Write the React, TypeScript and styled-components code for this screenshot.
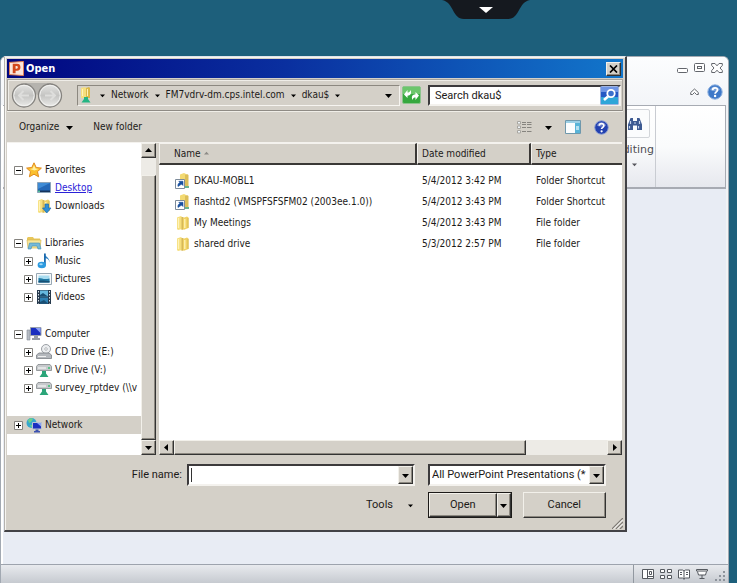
import React from "react";
import styled, { createGlobalStyle, css } from "styled-components";

const face = "#d4d0c8";
const ink = "#1c1a18";
const tahoma = '"DejaVu Sans Condensed", "DejaVu Sans", Tahoma, sans-serif';
const segoe = 'Roboto, "Noto Sans", sans-serif';

const Global = createGlobalStyle`
  * { box-sizing: border-box; }
  html, body { margin: 0; height: 100%; }
  body { background: #1d5f7b; color: ${ink}; font: 10px/18px ${tahoma}; overflow: hidden; }
  button, input, select { font: inherit; color: inherit; margin: 0; padding: 0; border: 0; border-radius: 0; background: none; }
  svg { display: block; flex: none; }
`;

const raised = css`
  background: ${face};
  border: 1px solid;
  border-color: #f2f0ea #333 #333 #f2f0ea;
  box-shadow: inset -1px -1px 0 #8c8880;
`;
const sunken = css`
  background: #fff;
  border: 2px solid;
  border-color: #3c3a3c #f4f2ee #f4f2ee #3c3a3c;
`;

const Desktop = styled.div`
  position: relative;
  min-height: 100vh;
  display: flex;
  flex-direction: column;
  padding: 56px 8px 0 0;
`;
const PullTab = styled.button`
  position: absolute;
  top: 0;
  left: 66%;
  transform: translateX(-50%);
`;

/* Application window behind the dialog */
const Stack = styled.div`
  flex: 1;
  display: grid;
  grid-template: minmax(0, 1fr) / minmax(0, 1fr);
  & > * { grid-area: 1 / 1; }
`;
const AppWindow = styled.div`
  display: flex;
  flex-direction: column;
  background: #e8ecf4;
  border: solid #a2a9b2;
  border-width: 1px 1px 0 1px;
  border-radius: 6px 6px 0 0;
  box-shadow: inset 2px 2px 0 #fff, inset -2px 0 0 #f1f3f5;
  overflow: hidden;
`;
const AppTop = styled.div`
  height: 48px;
  display: flex;
  flex-direction: column;
  align-items: flex-end;
  padding: 5px 5px 0 0;
  gap: 10px;
  background: linear-gradient(#fcfdfe, #f3f5f8);
`;
const WindowButtons = styled.div`
  display: flex;
  align-items: center;
  gap: 6px;
`;
const HelpRow = styled(WindowButtons)`
  gap: 8px;
`;
const PlainButton = styled.button`
  display: flex;
  align-items: center;
  gap: 7px;
`;
const Ribbon = styled.div`
  height: 84px;
  display: flex;
  justify-content: flex-end;
  margin: 0 2px;
  padding-right: 69px;
  border: solid #a7abb3;
  border-width: 1px 1px 2px 0;
  background: linear-gradient(#fff, #fafbfc 50%, #e6e8ee);
`;
const RibbonGroup = styled.div`
  display: flex;
  flex-direction: column;
  align-items: center;
  padding: 3px 1px 0 5px;
  border-right: 1px solid #c9ccd2;
`;
const RibbonButton = styled.button`
  display: flex;
  flex-direction: column;
  align-items: center;
  gap: 4px;
  font: 11px/16px "DejaVu Sans", sans-serif;
  color: #4e4e54;
`;
const RibbonFace = styled.span`
  display: flex;
  align-items: center;
  justify-content: center;
  width: 30px;
  height: 29px;
  border: 1px solid #d3d6da;
  border-radius: 2px;
  background: #fbfcfd;
`;
const StatusBar = styled.div`
  margin-top: auto;
  height: 19px;
  display: flex;
  justify-content: flex-end;
  align-items: center;
  border-top: 1px solid #9da3ad;
  background: linear-gradient(#e8eaee, #c6cad0);
`;
const ViewButtons = styled.div`
  display: flex;
  align-items: center;
  gap: 6px;
  height: 18px;
  padding: 1px 2px 0 8px;
  border-left: 1px solid #9298a0;
`;

/* Open dialog */
const Dialog = styled.section`
  align-self: start;
  margin: 0 102px 0 4px;
  padding: 2px 2px 0;
  border: solid;
  border-width: 1px 2px 2px 1px;
  border-color: #dfe5ec #424246 #424246 #b4b2ae;
  box-shadow: inset 1px 1px 0 #f6f4f0;
  background: ${face};
  display: flex;
  flex-direction: column;
  z-index: 1;
`;
const TitleBar = styled.header`
  display: flex;
  align-items: center;
  gap: 2px;
  height: 19px;
  padding: 0 2px;
  background: linear-gradient(90deg, #000680, #0a2f9f 45%, #1276cb);
  color: #fff;
`;
const Title = styled.h1`
  margin: 0;
  flex: 1;
  font: bold 11px/18px ${tahoma};
`;
const CloseButton = styled.button`
  ${raised}
  width: 15px;
  height: 14px;
  display: flex;
  align-items: center;
  justify-content: center;
`;
const NavBar = styled.div`
  display: flex;
  align-items: center;
  height: 32px;
  margin-top: 1px;
  padding: 0 1px 0 3px;
  border: 1px solid #8f8b85;
  border-color: #a7a39c #a7a39c #8f8b85 #a7a39c;
  box-shadow: inset 1px 1px 0 #efede8, 0 1px 0 #f0eee8;
`;
const Address = styled.div`
  flex: 1;
  min-width: 0;
  display: flex;
  align-items: center;
  height: 21px;
  margin-left: 12px;
  padding: 0 7px 0 0;
  border: 1px solid;
  border-color: #8c8880 #f6f4f0 #f6f4f0 #8c8880;
`;
const Crumbs = styled.div`
  display: flex;
  flex: 1;
  align-items: center;
  gap: 6px;
  padding-left: 6px;
  white-space: nowrap;
`;
const GreenButton = styled(PlainButton)`
  margin: 0 7px 0 2px;
`;
const SearchBox = styled.div`
  ${sunken}
  display: flex;
  align-items: center;
  width: 193px;
  height: 21px;
  & input {
    flex: 1;
    min-width: 0;
    padding-left: 5px;
    outline: 0;
    font: 11px/17px ${segoe};
    &::placeholder { color: ${ink}; opacity: 1; }
  }
`;
const ToolBar = styled.div`
  display: flex;
  align-items: center;
  gap: 20px;
  height: 31px;
  padding: 1px 14px 0 12px;
`;
const ToolGroup = styled.div`
  display: flex;
  align-items: center;
  gap: 13px;
  margin-left: auto;
`;
const Panes = styled.div`
  display: flex;
  gap: 3px;
  height: 313px;
  margin-right: 1px;
  border-top: 1px solid #f4f2ee;
`;
const TreePane = styled.nav`
  display: flex;
  width: 149px;
  background: #fff;
`;
const Tree = styled.div`
  flex: 1;
  min-width: 0;
  display: flex;
  flex-direction: column;
  gap: 19px;
  padding-top: 18px;
  overflow: hidden;
`;
const TreeRow = styled.div<{ $child?: boolean; $selected?: boolean }>`
  display: flex;
  align-items: center;
  height: 18px;
  padding-left: ${(p) => (p.$child ? 17 : 7)}px;
  white-space: nowrap;
  background: ${(p) => (p.$selected ? face : "transparent")};
`;
const Expander = styled.button<{ $blank?: boolean }>`
  flex: none;
  width: 9px;
  visibility: ${(p) => (p.$blank ? "hidden" : "visible")};
`;
const TreeIcon = styled.span`
  flex: none;
  width: 16px;
  margin: 0 3px;
`;
const TreeLink = styled.a<{ $active?: boolean }>`
  color: ${(p) => (p.$active ? "#2a22d8" : ink)};
  text-decoration: ${(p) => (p.$active ? "underline" : "none")};
`;
const ScrollBar = styled.div<{ $row?: boolean }>`
  display: flex;
  flex-direction: ${(p) => (p.$row ? "row" : "column")};
  flex: none;
  ${(p) => (p.$row ? "height" : "width")}: 15px;
  background: #edebe6;
`;
const ScrollButton = styled.button`
  ${raised}
  width: 15px;
  height: 15px;
  flex: none;
  display: flex;
  align-items: center;
  justify-content: center;
`;
const Thumb = styled.div<{ $size: number }>`
  ${raised}
  flex: ${(p) => p.$size} 1 0;
`;
const Track = styled.div<{ $size: number }>`
  flex: ${(p) => p.$size} 1 0;
`;
const FilePane = styled.div`
  flex: 1;
  min-width: 0;
  display: flex;
  flex-direction: column;
  justify-content: space-between;
  background: #fff;
`;
const Files = styled.table`
  width: 100%;
  table-layout: fixed;
  border-collapse: separate;
  border-spacing: 0;
  white-space: nowrap;
  & th {
    height: 22px;
    padding: 0 0 0 4px;
    text-align: left;
    font-weight: normal;
    background: ${face};
    border: solid;
    border-width: 1px 2px 2px 1px;
    border-color: #f4f2ee #3a3836 #3a3836 #f4f2ee;
  }
  & th:first-child { padding-left: 14px; }
  & th:last-child { border-right: 0; }
  & thead::after { content: ""; display: block; height: 5px; }
  & td { height: 21px; padding: 0 0 0 5px; }
  & td:first-child { padding-left: 16px; }
`;
const Label = styled.span`
  display: flex;
  align-items: center;
  gap: 3px;
`;
const Footer = styled.footer`
  display: grid;
  grid-template-columns: 1fr 178px;
  gap: 6px 13px;
  padding: 9px 17px 0 0;
  font: 11px/18px ${segoe};
`;
const FileNameRow = styled.div`
  display: flex;
  align-items: center;
  justify-content: flex-end;
  gap: 5px;
  & input {
    flex: 1;
    min-width: 0;
    outline: 0;
    height: 100%;
    background: linear-gradient(#333, #333) 2px center / 1px 14px no-repeat;
  }
`;
const Combo = styled.div<{ $wide?: boolean }>`
  ${sunken}
  display: flex;
  position: relative;
  height: 22px;
  width: ${(p) => (p.$wide ? "228px" : "auto")};
  & select {
    flex: 1;
    min-width: 0;
    appearance: none;
    outline: 0;
    padding: 0 15px 0 2px;
    line-height: 18px;
  }
`;
const DropButton = styled(ScrollButton)`
  height: 18px;
`;
const DropFace = styled(ScrollButton).attrs({ as: "span" })`
  position: absolute;
  top: 0;
  right: 0;
  height: 18px;
  pointer-events: none;
`;
const Tools = styled(PlainButton)`
  justify-self: end;
  gap: 15px;
  padding-right: 2px;
`;
const Actions = styled.div`
  display: flex;
  gap: 11px;
  height: 26px;
`;
const Split = styled.div`
  display: flex;
  flex: 1;
  border: 1px solid #1c1a18;
`;
const PushButton = styled.button`
  ${raised}
  flex: 1;
`;
const SplitArrow = styled(PushButton)`
  flex: 0 0 14px;
  display: flex;
  align-items: center;
  justify-content: center;
`;
const GripRow = styled.div`
  display: flex;
  justify-content: flex-end;
  height: 12px;
`;

type Dir = "up" | "down" | "left" | "right";
const arrowPaths: Record<Dir, string> = {
  down: "M0 2h7L3.5 6z",
  up: "M0 5h7L3.500 1z",
  left: "M5 0v7L1 3.500z",
  right: "M2 0v7l4-3.500z",
};
const Arrow = ({ dir = "down", size = 7, color = "#000" }: { dir?: Dir; size?: number; color?: string }) => (
  <svg width={size} height={size} viewBox="0 0 7 7"><path d={arrowPaths[dir]} fill={color} /></svg>
);

const Icon = ({ children, size = 16 }: { children: React.ReactNode; size?: number }) => (
  <svg width={size} height={size} viewBox="0 0 16 16" fill="none">{children}</svg>
);

const FolderArt = () => (
  <>
    <path d="M2 2.500l4-1.500 1 1v12l-4 1-1-1z" fill="#f6df7e" />
    <path d="M6.500 2h2v12.500l-2 .5z" fill="#d6b858" />
    <path d="M8 3l4-1.500 1.500 1V13L9 14.800 8 14z" fill="#f0d264" />
    <path d="M3.500 3v10M9.800 4v9" stroke="#fff3b8" strokeWidth="1.300" />
    <path d="M13 3v10" stroke="#d8b850" />
  </>
);
const Folder = () => <Icon><FolderArt /></Icon>;
const Shortcut = () => (
  <Icon>
    <path d="M5 1.500l4-1.500 2 1v12H5z" fill="#f3da72" />
    <path d="M10 2l2-1 1.500 1v11H10z" fill="#dcbe58" />
    <path d="M10 13h4v2h-4z" fill="#66b590" />
    <path d="M.5 6.500h9v9h-9z" fill="#fff" stroke="#7d8b9a" />
    <path d="M3 13.500c-.5-2 .5-3.500 2-4L3.800 8.300H8v4.200L6.700 11.200C5.500 11.500 4.500 12.500 3 13.500z" fill="#174f9e" stroke="#174f9e" strokeWidth=".6" />
  </Icon>
);
const NetFolder = () => (
  <Icon>
    <path d="M3 1l4-1 1 1v10H3z" fill="#f6df7e" />
    <path d="M8 1l3-1 1 1v10H8z" fill="#dcb94a" />
    <path d="M4.500 2v7M9.500 2v7" stroke="#fff3b8" />
    <path d="M6 10h4v2l2.500 3.500h-9L6 12z" fill="#25b583" />
  </Icon>
);
const Star = () => (
  <Icon>
    <path d="M8 .8l2.200 4.700 5.200.6-3.900 3.500 1.100 5.200L8 12.200l-4.600 2.600 1.100-5.200L.6 6.100l5.200-.6z" fill="#fbc02e" stroke="#e08a1e" />
    <path d="M8 3l1.500 3.500 3 .4-4 1.600-4.500-1.600 2.700-.4z" fill="#fff0a0" />
  </Icon>
);
const DesktopIcon = () => (
  <Icon>
    <path d="M1.500 2.500h13v10h-13z" fill="#2468b8" stroke="#8aa2b8" />
    <path d="M2 3h12L2 9z" fill="#3e8bd6" />
    <path d="M2 10.500h12V12H2z" fill="#16345c" />
    <path d="M2 10.500h2V12H2z" fill="#4fc09a" />
  </Icon>
);
const Downloads = () => (
  <Icon>
    <FolderArt />
    <path d="M9 6h3.500v4H15l-4.200 5L6.500 10H9z" fill="#2f8fd6" stroke="#1b6aae" strokeWidth=".7" />
  </Icon>
);
const Libraries = () => (
  <Icon>
    <path d="M1 3l1-1h5l1 1.500h6V6H1z" fill="#e8c65a" />
    <path d="M1 5h14l-1 8H2z" fill="#f8e79c" stroke="#d8b850" strokeWidth=".7" />
    <path d="M3.500 8h10l1.500 6h-3l-1-3H6l-1 3H2z" fill="#76b9d8" stroke="#3f8db5" strokeWidth=".6" />
  </Icon>
);
const Music = () => (
  <Icon>
    <path d="M8 .5c1 3 6 4 5.500 9-.5-3-2-4-4.500-4.500z" fill="#2a7fc4" />
    <path d="M8 .5h1.800v12H8z" fill="#1b6aae" />
    <ellipse cx="5.800" cy="12" rx="4.200" ry="3.200" fill="#2d9be0" />
    <ellipse cx="5" cy="11.300" rx="1.800" ry="1" fill="#9fd8f8" />
  </Icon>
);
const Pictures = () => (
  <Icon>
    <path d="M.5 2.500h15v11H.5z" fill="#f5f8fa" stroke="#98a8b4" />
    <path d="M2.500 4.500h11v7h-11z" fill="#a8dcf0" />
    <path d="M2.500 7c4 0 5 2 11 .5v4h-11z" fill="#1f78a4" />
    <path d="M2.500 10c4-1 6 0 11 0v1.500h-11z" fill="#174f74" />
  </Icon>
);
const Videos = () => (
  <Icon>
    <path d="M1 1h14v14H1z" fill="#26394c" />
    <path d="M4 1.500h8v6H4z" fill="#66b8de" />
    <path d="M4 8.500h8v6H4z" fill="#2e80b2" />
    <path d="M4 6l3-2 5 3.500H4zM4 13l4-2 4 3.500H4z" fill="#194f74" />
    <path d="M2.500 2v12.500M13.500 2v12.500" stroke="#d8e2ea" strokeDasharray="1.500 1.500" />
  </Icon>
);
const Computer = () => (
  <Icon>
    <path d="M1 4h3v10H1z" fill="#b7bcc4" stroke="#858c96" strokeWidth=".6" />
    <path d="M4.500 1.500h10.500v8H4.500z" fill="#1a2fc0" stroke="#98a0ac" />
    <path d="M9.500 2H14.500v5z" fill="#8ba0f4" />
    <path d="M8 10h4v2h2v2H6v-2h2z" fill="#989ea8" />
  </Icon>
);
const CdDrive = () => (
  <Icon>
    <circle cx="10" cy="5" r="4.500" fill="#eceef0" stroke="#9a9ea4" />
    <circle cx="10" cy="5" r="1.300" fill="#fff" stroke="#9a9ea4" strokeWidth=".7" />
    <path d="M3 9h10l2.500 2v3.500H.5V11z" fill="#b4b8bd" stroke="#7c8086" strokeWidth=".8" />
    <path d="M2 12.500h8" stroke="#f0f0f0" />
  </Icon>
);
const NetDrive = () => (
  <Icon>
    <path d="M2 2.500h12l1.500 2v4H.5v-4z" fill="#c6c9cc" stroke="#84888c" strokeWidth=".8" />
    <path d="M2 6h8" stroke="#fff" />
    <path d="M12 6h2" stroke="#36c070" strokeWidth="1.500" />
    <path d="M6 9h4v2.500l2.500 3.500h-9L6 11.500z" fill="#2ba579" />
  </Icon>
);
const Network = () => (
  <Icon>
    <circle cx="5.500" cy="6" r="5" fill="#36a8cc" />
    <path d="M2 3c2-2 4-2 5-1L5 5 3 6zM4 8l3 0-1 3z" fill="#6cd08a" />
    <path d="M6.500 5.500h9v6.500h-9z" fill="#1a2fc0" stroke="#b8c4d4" />
    <path d="M11 6h4v3.500z" fill="#8ba0f4" />
    <path d="M9.500 12.500h3v1.500h1.500v1.500H8V14h1.500z" fill="#3d52b0" />
  </Icon>
);
const PowerPoint = () => (
  <Icon size={15}>
    <path d="M.5 1.500l15-1v15l-15-1z" fill="#fbe6dc" stroke="#e8804c" />
    <path d="M4 3h4.500a3.700 3.700 0 0 1 0 7.400H7V13H4zm3 2.300v2.900h1a1.450 1.450 0 0 0 0-2.900z" fill="#d2481c" fillRule="evenodd" />
  </Icon>
);
const Help = ({ size = 16, light }: { size?: number; light?: boolean }) => (
  <Icon size={size}>
    <circle cx="8" cy="8" r="7.200" fill={light ? "#3d78c8" : "#2341b0"} stroke={light ? "#8fb2e0" : "#8a9cd0"} />
    <path d="M3 6a5.300 5.300 0 0 1 10 0c-3 1.500-7 1.500-10 0z" fill="#fff" opacity=".3" />
    <path d="M5.600 6.200c0-3.200 5-3.100 4.900-.2 0 1.800-2.400 1.900-2.400 3.700" stroke="#fff" strokeWidth="1.800" />
    <circle cx="8.100" cy="12" r="1.200" fill="#fff" />
  </Icon>
);
const Toggle = ({ open }: { open?: boolean }) => (
  <svg width="9" height="9" viewBox="0 0 9 9" fill="none">
    <path d="M.5.5h8v8h-8z" fill="#fff" stroke="#84827e" />
    <path d={open ? "M2 4.500h5" : "M2 4.500h5M4.500 2v5"} stroke="#000" />
  </svg>
);
const BackForward = () => (
  <svg width="54" height="27" viewBox="0 0 54 27" fill="none">
    <defs>
      <linearGradient id="orb" x1="0" y1="0" x2="0" y2="1">
        <stop stopColor="#e6e6e4" /><stop offset=".5" stopColor="#c4c4c2" /><stop offset="1" stopColor="#ececea" />
      </linearGradient>
    </defs>
    <path d="M14 1h26v8l-13 4-13-4z" fill="#b5b3ae" />
    {[13, 39].map((x) => (
      <g key={x}>
        <circle cx={x} cy="13.500" r="11.500" fill="url(#orb)" stroke="#85837f" strokeWidth="1.300" />
        <circle cx={x} cy="13.500" r="10.200" stroke="#f2f2f0" />
      </g>
    ))}
    <path d="M18 13.500H8m4.500-4.500L8 13.500l4.500 4.500M34 13.500h10M39.500 9l4.500 4.500-4.500 4.500" stroke="#dededc" strokeWidth="2" />
  </svg>
);
const Refresh = () => (
  <svg width="19" height="18" viewBox="0 0 19 18" fill="none">
    <rect x=".5" y=".5" width="18" height="17" rx="1.500" fill="#36a83e" stroke="#8cc48c" />
    <path d="M1 1h17v7H1z" fill="#6cc66c" />
    <path d="M2 8.500L5.500 4v2.500C7 6.500 8 6 8.500 4c1.500 3.500 0 5.500-3 5.700V12zM17 9.500L13.500 14v-2.500c-1.500 0-2.500.5-3 2.500-1.500-3.500 0-5.500 3-5.700V6z" fill="#fff" />
  </svg>
);
const SearchIcon = () => (
  <svg width="19" height="19" viewBox="0 0 19 19" fill="none">
    <rect x=".5" y=".5" width="18" height="18" rx="1" fill="#2459c4" stroke="#9fb4e0" />
    <path d="M1 11h17v7H1z" fill="#2fa6d8" />
    <path d="M1 1h17v5H1z" fill="#6f95e4" />
    <circle cx="11" cy="7.500" r="3.700" fill="#3c70cc" stroke="#fff" strokeWidth="1.800" />
    <path d="M8 10.500L4 14" stroke="#fff" strokeWidth="2.600" />
  </svg>
);
const ListView = () => (
  <svg width="15" height="13" viewBox="0 0 15 13" fill="none">
    <path d="M.5.5h3v2.500h-3zM.5 5h3v2.500h-3zM.5 9.500h3V12h-3z" fill="#eef4f8" stroke="#a8a6a1" />
    <path d="M5 1.500H9M5 3.500H9M5 6.500H9M5 10.500H9M10 1.500H14.500M10 3.500H14.500M10 6.500H14.500M10 10.500H14.500" stroke="#86847f" />
  </svg>
);
const PreviewPane = () => (
  <svg width="16" height="14" viewBox="0 0 16 14" fill="none">
    <path d="M.5.5h15v13H.5z" fill="#fbfdfe" stroke="#6f98ac" />
    <path d="M1 1h14v2H1z" fill="#9cd0e6" />
    <path d="M10 3h5v10h-5z" fill="#58b4d8" />
    <path d="M11 6h3v4h-3z" fill="#b4e0f0" />
  </svg>
);
const Binoculars = () => (
  <Icon>
    <path d="M3.500 2h2.500v3H10V2h2.500l2.500 6.500V14h-5V9.500H6V14H1V8.500z" fill="#3d5a92" />
    <path d="M3.500 5v3M12.500 5v3M2.500 10v2.500M11.500 10v2.500M7 7h2" stroke="#c6d4ec" strokeWidth="1.200" />
  </Icon>
);
const Grip = () => (
  <svg width="11" height="11" viewBox="0 0 11 11" fill="none">
    <path d="M0 11L11 0M4 11l7-7M8 11l3-3" stroke="#807c76" strokeWidth="1.300" />
    <path d="M1.500 11L11 1.500M5.500 11L11 5.500" stroke="#fff" />
  </svg>
);

type Node = { name: string; icon: React.ReactNode; open?: boolean; leaf?: boolean; active?: boolean; selected?: boolean };
const tree: Node[][] = [
  [
    { name: "Favorites", icon: <Star />, open: true },
    { name: "Desktop", icon: <DesktopIcon />, leaf: true, active: true },
    { name: "Downloads", icon: <Downloads />, leaf: true },
  ],
  [
    { name: "Libraries", icon: <Libraries />, open: true },
    { name: "Music", icon: <Music /> },
    { name: "Pictures", icon: <Pictures /> },
    { name: "Videos", icon: <Videos /> },
  ],
  [
    { name: "Computer", icon: <Computer />, open: true },
    { name: "CD Drive (E:)", icon: <CdDrive /> },
    { name: "V Drive (V:)", icon: <NetDrive /> },
    { name: "survey_rptdev (\\\\v", icon: <NetDrive /> },
  ],
  [{ name: "Network", icon: <Network />, selected: true }],
];

const files = [
  { name: "DKAU-MOBL1", date: "5/4/2012 3:42 PM", type: "Folder Shortcut" },
  { name: "flashtd2 (VMSPFSFSFM02 (2003ee.1.0))", date: "5/4/2012 3:43 PM", type: "Folder Shortcut" },
  { name: "My Meetings", date: "5/4/2012 3:43 PM", type: "File folder" },
  { name: "shared drive", date: "5/3/2012 2:57 PM", type: "File folder" },
];

const Application = () => (
  <AppWindow>
    <AppTop>
      <WindowButtons>
        <PlainButton aria-label="Minimize">
          <svg width="11" height="12" viewBox="0 0 11 12"><rect x=".5" y="6.500" width="10" height="4" rx="1" fill="#fff" stroke="#63666c" /></svg>
        </PlainButton>
        <PlainButton aria-label="Restore">
          <svg width="11" height="12" viewBox="0 0 11 12" fill="#fff" stroke="#63666c"><rect x=".5" y="1.500" width="10" height="8" rx="1" /><rect x="3.500" y="4.500" width="4" height="2" /></svg>
        </PlainButton>
        <PlainButton aria-label="Close application">
          <svg width="12" height="12" viewBox="0 0 12 12"><path d="M.7 1.500h3.300l2 2.300 2-2.300h3.300v2L9 6l2.300 2.500v2H8L6 8.200l-2 2.300H.7v-2L3 6 .7 3.500z" fill="#fff" stroke="#63666c" /></svg>
        </PlainButton>
      </WindowButtons>
      <HelpRow>
        <PlainButton aria-label="Minimize ribbon">
          <svg width="9" height="8" viewBox="0 0 9 8"><path d="M.7 4.500L4.500 1l3.800 3.500v2H6.500l-2-2-2 2H.7z" fill="#fff" stroke="#63666c" /></svg>
        </PlainButton>
        <PlainButton aria-label="Application help"><Help size={16} light /></PlainButton>
      </HelpRow>
    </AppTop>
    <Ribbon>
      <RibbonGroup>
        <RibbonButton>
          <RibbonFace><Binoculars /></RibbonFace>
          Editing
          <Arrow size={5} color="#55555c" />
        </RibbonButton>
      </RibbonGroup>
    </Ribbon>
    <StatusBar>
      <ViewButtons>
        <PlainButton aria-label="Normal view">
          <svg width="12" height="11" viewBox="0 0 12 11" fill="#fff" stroke="#55595f"><path d="M.5.5h11v9H.5zM5.500.5v9M7.500 2.500h2v3h-2zM5.500 7.500h6" /></svg>
        </PlainButton>
        <PlainButton aria-label="Slide sorter">
          <svg width="12" height="11" viewBox="0 0 12 11" fill="#fff" stroke="#55595f"><path d="M.5.5h4v3h-4zM7.500.5h4v3h-4zM.5 6.500h4v3h-4zM7.500 6.500h4v3h-4z" /></svg>
        </PlainButton>
        <PlainButton aria-label="Reading view">
          <svg width="12" height="11" viewBox="0 0 12 11" fill="#fff" stroke="#55595f"><path d="M.5 1h4L6 2l1.500-1h4v8h-4L6 10 4.500 9h-4zM6 2v8.500M2 3.500h2M2 5.500h2M8 3.500h2M8 5.500h2" /></svg>
        </PlainButton>
        <PlainButton aria-label="Slide show">
          <svg width="12" height="11" viewBox="0 0 12 11" fill="#fff" stroke="#55595f"><path d="M.5.500h11v1.500H.5zM1.500 2.500l1 3.500h7l1-3.500M6 6v3.500M3.500 9.500h5" /></svg>
        </PlainButton>
        <svg width="12" height="14" viewBox="4 0 12 14" fill="#8d939b"><path d="M13 3h2v2h-2zM13 7h2v2h-2zM13 11h2v2h-2zM9 7h2v2H9zM9 11h2v2H9zM5 11h2v2H5z" /></svg>
      </ViewButtons>
    </StatusBar>
  </AppWindow>
);

export default function App() {
  return (
    <>
      <Global />
      <Desktop>
        <PullTab aria-label="Show toolbar">
          <svg width="88" height="20" viewBox="0 0 88 20">
            <path d="M0 0h88c-12 2-10 19-22 19H22C10 19 12 2 0 0z" fill="#15191f" />
            <path d="M37 7h14l-7 6z" fill="#fff" />
          </svg>
        </PullTab>
        <Stack>
          <Application />
          <Dialog role="dialog" aria-label="Open">
            <TitleBar>
              <PowerPoint />
              <Title>Open</Title>
              <CloseButton aria-label="Close">
                <svg width="9" height="8" viewBox="0 0 9 8"><path d="M1 .5l7 7M8 .5l-7 7" stroke="#000" strokeWidth="1.700" /></svg>
              </CloseButton>
            </TitleBar>
            <NavBar>
              <PlainButton aria-label="Back and forward"><BackForward /></PlainButton>
              <Address>
                <NetFolder />
                <Crumbs>
                  <Arrow size={5} />
                  <span>Network</span>
                  <Arrow size={5} />
                  <span>FM7vdrv-dm.cps.intel.com</span>
                  <Arrow size={5} />
                  <span>dkau$</span>
                  <Arrow size={5} />
                </Crumbs>
                <PlainButton aria-label="Recent locations"><Arrow /></PlainButton>
              </Address>
              <GreenButton aria-label="Refresh"><Refresh /></GreenButton>
              <SearchBox>
                <input type="text" aria-label="Search" placeholder="Search dkau$" />
                <PlainButton aria-label="Run search"><SearchIcon /></PlainButton>
              </SearchBox>
            </NavBar>
            <ToolBar>
              <PlainButton>Organize<Arrow /></PlainButton>
              <PlainButton>New folder</PlainButton>
              <ToolGroup>
                <PlainButton aria-label="View"><ListView /></PlainButton>
                <PlainButton aria-label="View options"><Arrow /></PlainButton>
                <PlainButton aria-label="Preview pane"><PreviewPane /></PlainButton>
                <PlainButton aria-label="Help"><Help size={15} /></PlainButton>
              </ToolGroup>
            </ToolBar>
            <Panes>
              <TreePane aria-label="Folders">
                <Tree>
                  {tree.map((group) => (
                    <div key={group[0].name}>
                      {group.map((n, i) => (
                        <TreeRow key={n.name} $child={i > 0} $selected={n.selected}>
                          <Expander $blank={n.leaf} aria-label={`Toggle ${n.name}`}><Toggle open={n.open} /></Expander>
                          <TreeIcon>{n.icon}</TreeIcon>
                          <TreeLink href="#" $active={n.active}>{n.name}</TreeLink>
                        </TreeRow>
                      ))}
                    </div>
                  ))}
                </Tree>
                <ScrollBar>
                  <ScrollButton aria-label="Scroll up"><Arrow dir="up" /></ScrollButton>
                  <Track $size={17} />
                  <Thumb $size={265} />
                  <ScrollButton aria-label="Scroll down"><Arrow /></ScrollButton>
                </ScrollBar>
              </TreePane>
              <FilePane>
                <Files>
                  <colgroup>
                    <col />
                    <col width="114" />
                    <col width="91" />
                  </colgroup>
                  <thead>
                    <tr>
                      <th><Label>Name <Arrow dir="up" size={5} color="#8c8a86" /></Label></th>
                      <th>Date modified</th>
                      <th>Type</th>
                    </tr>
                  </thead>
                  <tbody>
                    {files.map((f) => (
                      <tr key={f.name}>
                        <td><Label>{f.type === "File folder" ? <Folder /> : <Shortcut />}{f.name}</Label></td>
                        <td>{f.date}</td>
                        <td>{f.type}</td>
                      </tr>
                    ))}
                  </tbody>
                </Files>
                <ScrollBar $row>
                  <ScrollButton aria-label="Scroll left"><Arrow dir="left" /></ScrollButton>
                  <Thumb $size={352} />
                  <Track $size={82} />
                  <ScrollButton aria-label="Scroll right"><Arrow dir="right" /></ScrollButton>
                </ScrollBar>
              </FilePane>
            </Panes>
            <Footer>
              <FileNameRow>
                <label htmlFor="file-name">File name:</label>
                <Combo $wide>
                  <input id="file-name" type="text" />
                  <DropButton aria-label="Recent file names"><Arrow /></DropButton>
                </Combo>
              </FileNameRow>
              <Combo>
                <select aria-label="File type"><option>All PowerPoint Presentations (*</option></select>
                <DropFace><Arrow /></DropFace>
              </Combo>
              <Tools>Tools<Arrow size={5} /></Tools>
              <Actions>
                <Split>
                  <PushButton>Open</PushButton>
                  <SplitArrow aria-label="Open options"><Arrow /></SplitArrow>
                </Split>
                <PushButton>Cancel</PushButton>
              </Actions>
            </Footer>
            <GripRow><Grip /></GripRow>
          </Dialog>
        </Stack>
      </Desktop>
    </>
  );
}
